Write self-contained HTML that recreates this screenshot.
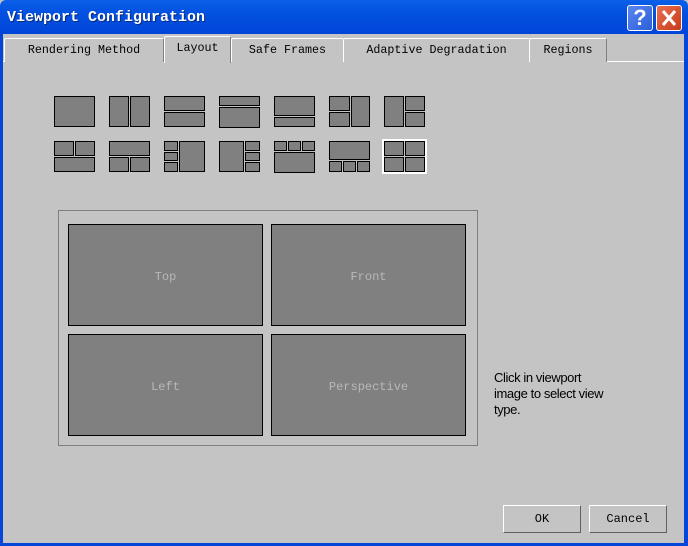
<!DOCTYPE html>
<html><head><style>
*{margin:0;padding:0;box-sizing:border-box}
body{width:688px;height:546px;overflow:hidden;background:#c4c4c4;position:relative;font-family:"Liberation Mono",monospace}
.a{position:absolute}
#title{left:0;top:0;width:688px;height:34px;background:linear-gradient(#0a5fe8,#0350e0 40%,#0046d8);border-radius:6px 6px 0 0}
#ttext{left:7px;top:9px;color:#fff;font-weight:bold;font-size:15px;letter-spacing:0;text-shadow:1px 1px 0 #0a2a7a}
.bl{background:#0545d8}
.tab{position:absolute;top:38px;height:24px;border:1px solid #fff;border-right:1px solid #808080;border-bottom:none;background:#c4c4c4;font-size:11.7px;text-align:center;line-height:22px;color:#000;border-radius:2px 2px 0 0}
.pane{position:absolute;background:#808080;border:1px solid #000;color:#b8b8b8;font-size:12px;text-align:center}
.btn{position:absolute;top:505px;height:28px;border:1px solid #fff;border-right-color:#606060;border-bottom-color:#606060;font-size:12px;text-align:center;line-height:26px}
</style></head><body>
<div class="a" id="title"></div>
<div class="a" id="ttext">Viewport Configuration</div>
<div class="a" style="left:627px;top:5px;width:26px;height:26px;border:1px solid #fff;border-radius:3px;background:linear-gradient(135deg,#5a86f0,#2b5fd8);color:#fff;font:bold 22px 'Liberation Sans',sans-serif;text-align:center;line-height:24px">?</div>
<div class="a" style="left:656px;top:5px;width:26px;height:26px;border:1px solid #fff;border-radius:3px;background:linear-gradient(135deg,#e87050,#c83a18)"><svg width="24" height="24" style="position:absolute;left:0;top:0"><path d="M6 5L18 19M18 5L6 19" stroke="#fff" stroke-width="3"/></svg></div>
<div class="a bl" style="left:0;top:34px;width:3px;height:512px"></div>
<div class="a bl" style="left:684px;top:34px;width:4px;height:512px"></div>
<div class="a bl" style="left:0;top:543px;width:688px;height:3px"></div>
<div class="a" style="left:3px;top:61px;width:681px;height:1px;background:#fff"></div>
<div class="tab" style="left:4px;width:160px">Rendering Method</div>
<div class="tab" style="left:164px;top:36px;height:27px;width:67px;z-index:2">Layout</div>
<div class="tab" style="left:231px;width:113px">Safe Frames</div>
<div class="tab" style="left:343px;width:187px">Adaptive Degradation</div>
<div class="tab" style="left:529px;width:78px">Regions</div>
<svg class="a" style="left:0;top:0" width="688" height="546">
<g fill="#808080" stroke="#000" stroke-width="1" id="icons">
<rect x="54.5" y="96.5" width="40" height="30"/>
<rect x="109.5" y="96.5" width="19" height="30"/><rect x="130.5" y="96.5" width="19" height="30"/>
<rect x="164.5" y="96.5" width="40" height="14"/><rect x="164.5" y="112.5" width="40" height="14"/>
<rect x="219.5" y="96.5" width="40" height="9"/><rect x="219.5" y="107.5" width="40" height="20"/>
<rect x="274.5" y="96.5" width="40" height="19"/><rect x="274.5" y="117.5" width="40" height="9"/>
<rect x="329.5" y="96.5" width="20" height="14"/><rect x="329.5" y="112.5" width="20" height="14"/><rect x="351.5" y="96.5" width="18" height="30"/>
<rect x="384.5" y="96.5" width="19" height="30"/><rect x="405.5" y="96.5" width="19" height="14"/><rect x="405.5" y="112.5" width="19" height="14"/>
<rect x="54.5" y="141.5" width="19" height="14"/><rect x="75.5" y="141.5" width="19" height="14"/><rect x="54.5" y="157.5" width="40" height="14"/>
<rect x="109.5" y="141.5" width="40" height="14"/><rect x="109.5" y="157.5" width="19" height="14"/><rect x="130.5" y="157.5" width="19" height="14"/>
<rect x="164.5" y="141.5" width="13" height="9"/><rect x="164.5" y="152.5" width="13" height="8"/><rect x="164.5" y="162.5" width="13" height="9"/><rect x="179.5" y="141.5" width="25" height="30"/>
<rect x="219.5" y="141.5" width="24" height="30"/><rect x="245.5" y="141.5" width="14" height="9"/><rect x="245.5" y="152.5" width="14" height="8"/><rect x="245.5" y="162.5" width="14" height="9"/>
<rect x="274.5" y="141.5" width="12" height="9"/><rect x="288.5" y="141.5" width="12" height="9"/><rect x="302.5" y="141.5" width="12" height="9"/><rect x="274.5" y="152.5" width="40" height="20"/>
<rect x="329.5" y="141.5" width="40" height="18"/><rect x="329.5" y="161.5" width="12" height="10"/><rect x="343.5" y="161.5" width="12" height="10"/><rect x="357.5" y="161.5" width="12" height="10"/>
</g>
<rect x="383" y="140" width="43" height="33" fill="#c4c4c4" stroke="#fff" stroke-width="2"/>
<g fill="#808080" stroke="#000"><rect x="384.5" y="141.5" width="19" height="14"/><rect x="405.5" y="141.5" width="19" height="14"/><rect x="384.5" y="157.5" width="19" height="14"/><rect x="405.5" y="157.5" width="19" height="14"/></g>
<rect x="58.5" y="210.5" width="419" height="235" fill="none" stroke="#808080"/>
</svg>
<div class="pane" style="left:68px;top:224px;width:195px;height:102px;line-height:104px">Top</div>
<div class="pane" style="left:271px;top:224px;width:195px;height:102px;line-height:104px">Front</div>
<div class="pane" style="left:68px;top:334px;width:195px;height:102px;line-height:104px">Left</div>
<div class="pane" style="left:271px;top:334px;width:195px;height:102px;line-height:104px">Perspective</div>
<div class="a" style="left:494px;top:370px;width:180px;white-space:nowrap;font:13px/16px 'Liberation Sans',sans-serif;letter-spacing:-0.4px;color:#000">Click in viewport<br>image to select view<br>type.</div>
<div class="btn" style="left:503px;width:78px">OK</div>
<div class="btn" style="left:589px;width:78px">Cancel</div>
</body></html>
